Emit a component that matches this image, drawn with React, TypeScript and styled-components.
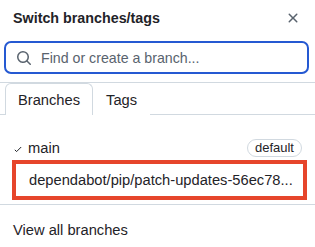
import styled, { createGlobalStyle } from 'styled-components';

const GlobalStyle = createGlobalStyle`
  body {
    margin: 0;
    background: #ffffff;
    font-family: 'Liberation Sans', Arial, sans-serif;
    color: #1f2328;
  }
`;

const Panel = styled.div`
  width: 315px;
  height: 247px;
  background: #ffffff;
  display: flex;
  flex-direction: column;
  overflow: hidden;
`;

const Header = styled.div`
  height: 36px;
  padding: 0 14px 0 13px;
  display: flex;
  align-items: center;
  justify-content: space-between;
`;

const Title = styled.h1`
  margin: 0;
  font-size: 14.3px;
  font-weight: 700;
  color: #1f2328;
`;

const CloseButton = styled.button`
  border: 0;
  background: none;
  padding: 0;
  width: 16px;
  height: 16px;
  display: flex;
  align-items: center;
  justify-content: center;
  color: #59636e;
`;

const SearchWrap = styled.div`
  padding: 5px 6px 0 4px;
`;

const SearchBox = styled.label`
  height: 33px;
  box-sizing: border-box;
  border: 2px solid #2559d2;
  border-radius: 7px;
  display: flex;
  align-items: center;
  gap: 9px;
  padding: 0 10px;
  color: #59636e;
`;

const SearchInput = styled.input`
  border: 0;
  outline: none;
  flex: 1;
  font-family: inherit;
  font-size: 14.2px;
  color: #1f2328;
  padding: 0;
  &::placeholder {
    color: #59636e;
  }
`;

const Divider = styled.div<{ $top: number }>`
  height: 1px;
  background: #d1d9e0;
  margin-top: ${(p) => p.$top}px;
`;

const TabRow = styled.div`
  display: flex;
  padding-left: 5px;
  border-bottom: 1px solid #d1d9e0;
  height: 31px;
`;

const Tab = styled.div<{ $active?: boolean }>`
  box-sizing: border-box;
  height: 32px;
  padding: 0 12px;
  display: flex;
  align-items: center;
  font-size: 14.7px;
  color: #1f2328;
  border: 1px solid ${(p) => (p.$active ? '#d1d9e0' : 'transparent')};
  border-bottom: 0;
  border-radius: 6px 6px 0 0;
  background: #ffffff;
`;

const List = styled.div`
  padding: 22px 0 0;
`;

const Row = styled.div<{ $marked?: boolean }>`
  box-sizing: border-box;
  height: ${(p) => (p.$marked ? '40px' : '21px')};
  margin: ${(p) => (p.$marked ? '0 8px 0 12px' : '0 14px 0 14px')};
  display: flex;
  align-items: center;
  font-size: 14.7px;
  color: #1f2328;
  border: ${(p) => (p.$marked ? '4px solid #e6452b' : '0')};
  padding-left: ${(p) => (p.$marked ? '13px' : '0')};
  margin-bottom: ${(p) => (p.$marked ? '0' : '2px')};
`;

const Check = styled.span`
  width: 14px;
  display: flex;
  align-items: center;
  padding-top: 3px;
`;

const Name = styled.span`
  flex: 1;
  white-space: nowrap;
  overflow: hidden;
`;

const Badge = styled.span`
  font-size: 13px;
  line-height: 16px;
  padding: 0 7px;
  border: 1px solid #d1d9e0;
  border-radius: 999px;
  color: #1f2328;
  margin-right: -1px;
`;

const Footer = styled.div`
  padding: 17px 13px 0;
  font-size: 14.7px;
  color: #1f2328;
`;

export default function App() {
  return (
    <>
      <GlobalStyle />
      <Panel>
        <Header>
          <Title>Switch branches/tags</Title>
          <CloseButton aria-label="Close">
            <svg width="16" height="16" viewBox="0 0 16 16" fill="currentColor">
              <path d="M3.72 3.72a.75.75 0 0 1 1.06 0L8 6.94l3.22-3.22a.749.749 0 0 1 1.275.326.749.749 0 0 1-.215.734L9.06 8l3.22 3.22a.749.749 0 0 1-.326 1.275.749.749 0 0 1-.734-.215L8 9.06l-3.22 3.220a.751.751 0 0 1-1.042-.018.751.751 0 0 1-.018-1.042L6.94 8 3.72 4.78a.75.75 0 0 1 0-1.06Z" />
            </svg>
          </CloseButton>
        </Header>
        <SearchWrap>
          <SearchBox>
            <svg width="16" height="16" viewBox="0 0 16 16" fill="currentColor">
              <path d="M10.68 11.74a6 6 0 0 1-7.922-8.982 6 6 0 0 1 8.982 7.922l3.04 3.040a.749.749 0 0 1-.326 1.275.749.749 0 0 1-.734-.215ZM11.5 7a4.499 4.499 0 1 0-8.997 0A4.499 4.499 0 0 0 11.5 7Z" />
            </svg>
            <SearchInput placeholder="Find or create a branch..." />
          </SearchBox>
        </SearchWrap>
        <Divider $top={8} />
        <TabRow>
          <Tab $active>Branches</Tab>
          <Tab>Tags</Tab>
        </TabRow>
        <List>
          <Row>
            <Check>
              <svg width="8" height="8" viewBox="0 0 8 8" fill="none" stroke="#1f2328" strokeWidth="1">
                <path d="M0.8 4.8l1.8 1.8L7.2 2" />
              </svg>
            </Check>
            <Name>main</Name>
            <Badge>default</Badge>
          </Row>
          <Row $marked>
            <Name>dependabot/pip/patch-updates-56ec78...</Name>
          </Row>
        </List>
        <Divider $top={4} />
        <Footer>View all branches</Footer>
      </Panel>
    </>
  );
}
